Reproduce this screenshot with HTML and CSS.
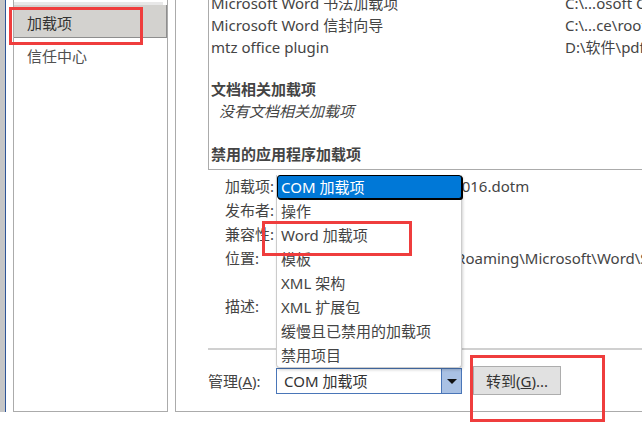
FILE: index.html
```html
<!DOCTYPE html>
<html lang="zh-CN">
<head>
  <meta charset="UTF-8">
  <title>Word 选项 - 加载项</title>
  <link rel="stylesheet" href="styles.css">
</head>
<body>
  <div class="window">
    <div class="edge"></div>

    <nav class="nav">
      <div class="nav-peek"></div>
      <div class="nav-item is-active">加载项</div>
      <div class="nav-item">信任中心</div>
    </nav>

    <main class="panel">
      <!-- add-in list (scrolled) -->
      <div class="addin-list">
        <div class="addin-rows">
          <div class="addin-row"><span>Microsoft Word 书法加载项</span><span>C:\...osoft Office\root\Office16</span></div>
          <div class="addin-row"><span>Microsoft Word 信封向导</span><span>C:\...ce\root\Office16\ADDINS</span></div>
          <div class="addin-row"><span>mtz office plugin</span><span>D:\软件\pdf\plugin.dll</span></div>
        </div>
        <div class="group-title group-first">文档相关加载项</div>
        <div class="group-empty">没有文档相关加载项</div>
        <div class="group-title">禁用的应用程序加载项</div>
      </div>

      <!-- details of selected add-in -->
      <div class="details">
        <div class="detail-row"><span class="detail-label">加载项:</span><span class="detail-value">Word Startup 模板 Tools 2016.dotm</span></div>
        <div class="detail-row"><span class="detail-label">发布者:</span><span class="detail-value"></span></div>
        <div class="detail-row"><span class="detail-label">兼容性:</span><span class="detail-value"></span></div>
        <div class="detail-row"><span class="detail-label">位置:</span><span class="detail-value">C:\Users\Jason\AppData\Roaming\Microsoft\Word\STARTUP</span></div>
        <div class="detail-row"></div>
        <div class="detail-row"><span class="detail-label">描述:</span><span class="detail-value"></span></div>
      </div>

      <!-- manage row -->
      <div class="manage">
        <span class="manage-label">管理(<u>A</u>):</span>
        <div class="combo">
          <ul class="combo-list">
            <li class="combo-option is-selected">COM 加载项</li>
            <li class="combo-option">操作</li>
            <li class="combo-option">Word 加载项</li>
            <li class="combo-option">模板</li>
            <li class="combo-option">XML 架构</li>
            <li class="combo-option">XML 扩展包</li>
            <li class="combo-option">缓慢且已禁用的加载项</li>
            <li class="combo-option">禁用项目</li>
          </ul>
          <span class="combo-text">COM 加载项</span>
          <span class="combo-arrow"></span>
        </div>
        <button class="go-btn">转到(<u>G</u>)...</button>
      </div>
    </main>
  </div>

  <!-- annotation boxes -->
  <div class="mark mark-nav"></div>
  <div class="mark mark-word"></div>
  <div class="mark mark-go"></div>
</body>
</html>
```

FILE: styles.css
```css
:root {
  --border: #ababab;
  --text: #444444;
  --accent: #0078d7;
  --mark: #ef3d3d;
}

html, body {
  margin: 0;
  padding: 0;
}

body {
  position: relative;
  width: 642px;
  height: 423px;
  overflow: hidden;
  background: #ffffff;
  color: var(--text);
  font-family: "Noto Sans", "Noto Sans CJK SC", sans-serif;
  font-size: 15px;
}

.window {
  display: flex;
  height: 412px;
}

.edge {
  width: 5px;
  flex: none;
  background: #c6c6c6;
  border-right: 1px solid #2f5597;
}

/* left navigation */
.nav {
  width: 155px;
  flex: none;
  box-sizing: border-box;
  margin-left: 7px;
  border: 1px solid var(--border);
  border-top: none;
}

.nav-peek {
  height: 3px;
  margin: 2px 4px 0 0;
  background: #e8e8e8;
}

.nav-item {
  box-sizing: border-box;
  height: 33px;
  padding: 3px 0 0 13px;
  line-height: 30px;
  color: #505050;
}

.nav-item.is-active {
  background: #d3d2cf;
  border-right: 1px solid #8e8e8e;
  border-bottom: 1px solid #8e8e8e;
  color: #333333;
}

/* right panel */
.panel {
  flex: 1;
  min-width: 0;
  display: flex;
  flex-direction: column;
  margin-left: 7px;
  padding-left: 32px;
  border-left: 1px solid var(--border);
  border-bottom: 1px solid var(--border);
}

.addin-list {
  box-sizing: border-box;
  height: 170px;
  padding-left: 2px;
  border-left: 1px solid var(--border);
  border-bottom: 1px solid var(--border);
  overflow: hidden;
  white-space: nowrap;
}

.addin-rows {
  margin-top: -8px;
}

.addin-row {
  display: grid;
  grid-template-columns: 354px 1fr;
  height: 22px;
  line-height: 22px;
}

.group-title {
  margin-top: 21px;
  height: 22px;
  line-height: 22px;
  font-weight: 700;
  color: #444444;
}

.group-first {
  margin-top: 20px;
}

.group-empty {
  height: 22px;
  line-height: 22px;
  padding-left: 8px;
  font-style: italic;
}

.details {
  box-sizing: border-box;
  height: 180px;
  padding: 4px 0 0 17px;
  border-bottom: 2px solid #d0d0d0;
  white-space: nowrap;
  overflow: hidden;
}

.detail-row {
  display: flex;
  height: 24px;
  line-height: 24px;
}

.detail-label {
  width: 56px;
  flex: none;
}

.manage {
  flex: 1;
  display: flex;
  align-items: center;
}

.manage-label {
  width: 68px;
  flex: none;
}

.combo {
  position: relative;
  box-sizing: border-box;
  width: 186px;
  height: 26px;
  display: flex;
  border: 1px solid #4a76b8;
  background: #ffffff;
}

.combo-text {
  flex: 1;
  padding-left: 7px;
  line-height: 24px;
  color: #333333;
}

.combo-arrow {
  width: 19px;
  flex: none;
  position: relative;
  background: #a9c1e4;
  border-left: 1px solid #4a76b8;
}

.combo-arrow::after {
  content: "";
  position: absolute;
  left: 5px;
  top: 10px;
  border-left: 5px solid transparent;
  border-right: 5px solid transparent;
  border-top: 5px solid #111111;
}

.combo-list {
  position: absolute;
  left: -1px;
  bottom: calc(100% + 1px);
  box-sizing: border-box;
  width: 186px;
  margin: 0;
  padding: 0;
  list-style: none;
  background: #ffffff;
  border: 1px solid #cccccc;
  border-top: none;
  border-radius: 0 0 4px 4px;
  box-shadow: 1px 2px 3px rgba(0, 0, 0, 0.18);
  z-index: 2;
}

.combo-option {
  box-sizing: border-box;
  height: 24px;
  line-height: 24px;
  padding-left: 4px;
  color: #444444;
  white-space: nowrap;
}

.combo-option.is-selected {
  margin: 0 -1px 0 0;
  padding-left: 3px;
  line-height: 22px;
  background: var(--accent);
  color: #ffffff;
  border: 1px solid #000000;
  border-radius: 3px;
  box-shadow: 1px 1px 0 #000000;
}

.go-btn {
  box-sizing: border-box;
  width: 88px;
  height: 29px;
  margin-left: 11px;
  padding: 0;
  background: #e1e1e1;
  border: 1px solid #adadad;
  color: #333333;
  font-family: inherit;
  font-size: 15px;
}

/* red annotation boxes */
.mark {
  position: absolute;
  box-sizing: border-box;
  border: 3px solid var(--mark);
  z-index: 5;
}

.mark-nav {
  left: 9px;
  top: 7px;
  width: 134px;
  height: 38px;
}

.mark-word {
  left: 262px;
  top: 221px;
  width: 150px;
  height: 35px;
}

.mark-go {
  left: 470px;
  top: 355px;
  width: 135px;
  height: 67px;
}
```
